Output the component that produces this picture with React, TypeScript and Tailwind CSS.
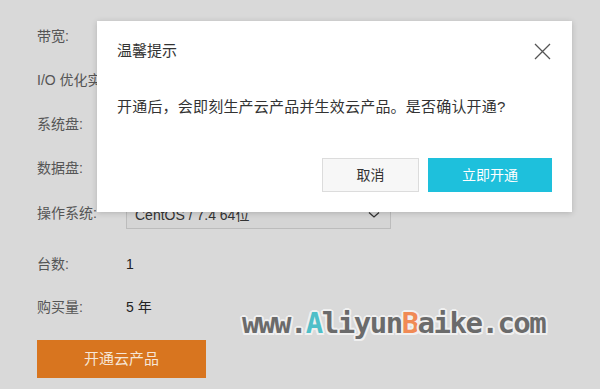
import React from "react";

const font = { fontFamily: '"Liberation Sans", "Noto Sans CJK SC", sans-serif' };

function Row({ label, h, children }: { label: string; h: string; children?: React.ReactNode }) {
  return (
    <div className={`flex items-center ${h}`}>
      <div className="w-[89px] shrink-0 whitespace-nowrap text-[14px] text-[#555]">{label}</div>
      {children}
    </div>
  );
}

export default function App() {
  return (
    <div className="relative h-[389px] w-[600px] overflow-hidden bg-[#d9d9d9]" style={font}>
      <div className="flex flex-col pl-[37px] pt-[14px]">
        <Row label="带宽:" h="h-[44px]" />
        <Row label="I/O 优化实例:" h="h-[44px]" />
        <Row label="系统盘:" h="h-[44px]" />
        <Row label="数据盘:" h="h-[44px]" />
        <Row label="操作系统:" h="h-[46px]">
          <div className="mb-[7px] flex h-[34px] w-[265px] items-center justify-between self-end border border-[#bcbcbc] bg-[#d5d5d5] pl-[8px] pr-[10px] pt-[6px] text-[14px] text-[#333]">
            <span>CentOS / 7.4 64位</span>
            <svg width="12" height="8" viewBox="0 0 12 8" fill="none" stroke="#333" strokeWidth="1.3">
              <path d="M1 1.5 L6 6 L11 1.5" />
            </svg>
          </div>
        </Row>
        <Row label="台数:" h="h-[56px]">
          <span className="text-[14px] text-[#222]">1</span>
        </Row>
        <Row label="购买量:" h="h-[30px]">
          <span className="text-[14px] text-[#222]">5 年</span>
        </Row>
        <div className="mt-[18px] flex h-[38px] w-[169px] items-center justify-center bg-[#d8751f] text-[15px] text-[#f6e6d6]">
          开通云产品
        </div>
      </div>

      <div
        className="absolute left-[242px] top-[308px] whitespace-nowrap text-[29px] font-bold leading-[30px] tracking-[-1.5px] text-[#6b6b6b] [text-shadow:2px_0_0_#f0f0f0,-2px_0_0_#f0f0f0,0_2px_0_#f0f0f0,0_-2px_0_#f0f0f0,1.5px_1.5px_0_#f0f0f0,-1.5px_-1.5px_0_#f0f0f0,1.5px_-1.5px_0_#f0f0f0,-1.5px_1.5px_0_#f0f0f0]"
        style={{ fontFamily: '"DejaVu Sans Mono", monospace' }}
      >
        www.<span className="text-[#4fbfc8]">A</span>liyun<span className="text-[#f08a55]">B</span>aike.com
      </div>

      <div className="absolute left-[97px] top-[21px] flex h-[191px] w-[475px] flex-col bg-white px-[20px] pb-[20px] pt-[20px] shadow-[0_1px_6px_rgba(0,0,0,0.18)]">
        <div className="flex items-center justify-between">
          <span className="text-[15px] leading-[20px] text-[#333]">温馨提示</span>
          <svg width="17" height="17" viewBox="0 0 17 17" stroke="#555" strokeWidth="1.3" className="mr-[1px]">
            <path d="M1 1 L16 16 M16 1 L1 16" />
          </svg>
        </div>
        <div className="mt-[35px] text-[15px] leading-[22px] tracking-[0.2px] text-[#333]">
          开通后，会即刻生产云产品并生效云产品。是否确认开通?
        </div>
        <div className="mt-auto flex justify-end gap-[9px]">
          <div className="flex h-[34px] w-[97px] items-center justify-center border border-[#dcdcdc] bg-[#f7f7f7] text-[14px] text-[#333]">
            取消
          </div>
          <div className="flex h-[34px] w-[124px] items-center justify-center bg-[#1ec0dc] text-[14px] text-white">
            立即开通
          </div>
        </div>
      </div>
    </div>
  );
}
